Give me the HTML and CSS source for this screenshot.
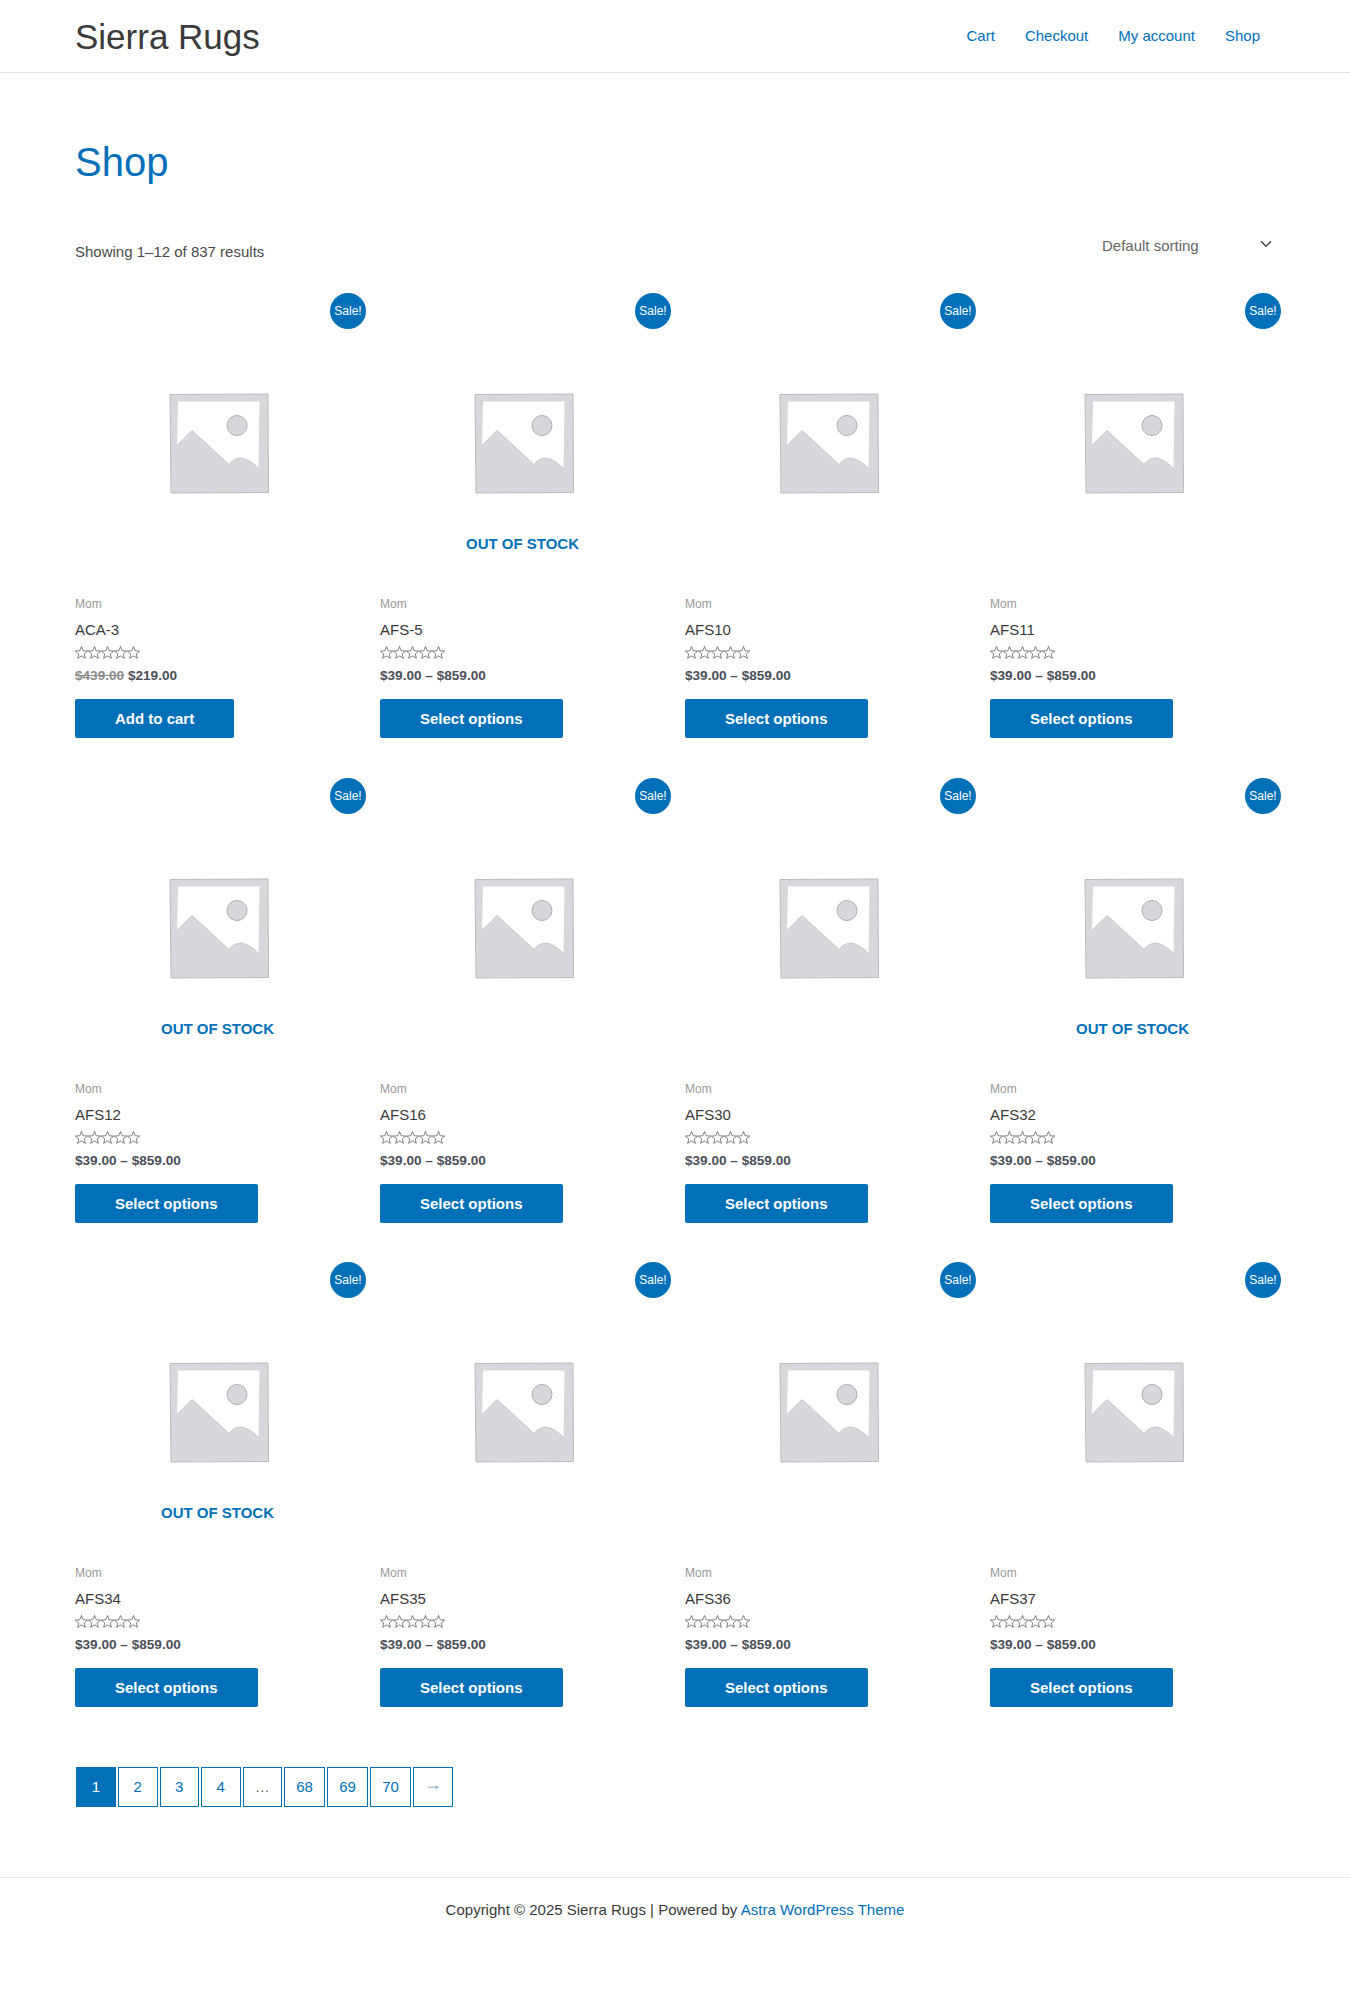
FILE: index.html
```html
<!DOCTYPE html>
<html lang="en">
<head>
<meta charset="utf-8">
<title>Shop – Sierra Rugs</title>
<link rel="stylesheet" href="styles.css">
</head>
<body>
<svg class="defs" aria-hidden="true" width="0" height="0">
  <symbol id="ph" viewBox="0 0 100 100">
    <path d="M1 1 L99 0.5 L99.5 99 L2 99.5 Z" fill="#d6d8dc" stroke="#bcbcbf" stroke-width="1"/>
    <path d="M9 8 L90.5 8 L89.5 75 Q81 66 72 64.5 Q65 64.5 60 71 L23 37 L8 52 Z" fill="#fff"/>
    <circle cx="68" cy="32" r="10" fill="#d6d8dc" stroke="#aeaeb2" stroke-width="1"/>
    <path d="M8 52 L23 37 L60 71 Q65 64.5 72 64.5 Q81 66 89.5 75" fill="none" stroke="#bcbcbf" stroke-width=".8"/>
  </symbol>
  <symbol id="star" viewBox="0 0 24 24">
    <path d="M12 1 L15.1 8.8 L23.4 9.3 L17 14.7 L19.1 22.8 L12 18.3 L4.9 22.8 L7 14.7 L.6 9.3 L8.9 8.8 Z" fill="#fff" stroke="#3f3f3f" stroke-width="1.2" stroke-linejoin="round"/>
  </symbol>
</svg>

<header class="site-header">
  <a class="logo" href="#">Sierra Rugs</a>
  <nav class="nav">
    <a href="#">Cart</a>
    <a href="#">Checkout</a>
    <a href="#">My account</a>
    <a href="#">Shop</a>
  </nav>
</header>

<main class="main">
  <h1 class="title">Shop</h1>
  <div class="toolbar">
    <p class="count">Showing 1–12 of 837 results</p>
    <div class="sort">
      <span class="sort-label">Default sorting</span>
      <svg class="chev" viewBox="0 0 12 8" width="12" height="8"><path d="M1 1.2 L6 6.2 L11 1.2" fill="none" stroke="#444" stroke-width="1.4"/></svg>
    </div>
  </div>

  <ul class="grid">
    <li class="card">
      <span class="badge">Sale!</span>
      <div class="thumb"><svg class="ph"><use href="#ph"/></svg></div>
      <p class="cat">Mom</p>
      <h2 class="name">ACA-3</h2>
      <div class="stars"><svg><use href="#star"/></svg><svg><use href="#star"/></svg><svg><use href="#star"/></svg><svg><use href="#star"/></svg><svg><use href="#star"/></svg></div>
      <p class="price"><del>$439.00</del> $219.00</p>
      <a class="btn" href="#">Add to cart</a>
    </li>
    <li class="card">
      <span class="badge">Sale!</span>
      <div class="thumb"><svg class="ph"><use href="#ph"/></svg><span class="oos">OUT OF STOCK</span></div>
      <p class="cat">Mom</p>
      <h2 class="name">AFS-5</h2>
      <div class="stars"><svg><use href="#star"/></svg><svg><use href="#star"/></svg><svg><use href="#star"/></svg><svg><use href="#star"/></svg><svg><use href="#star"/></svg></div>
      <p class="price">$39.00 – $859.00</p>
      <a class="btn" href="#">Select options</a>
    </li>
    <li class="card">
      <span class="badge">Sale!</span>
      <div class="thumb"><svg class="ph"><use href="#ph"/></svg></div>
      <p class="cat">Mom</p>
      <h2 class="name">AFS10</h2>
      <div class="stars"><svg><use href="#star"/></svg><svg><use href="#star"/></svg><svg><use href="#star"/></svg><svg><use href="#star"/></svg><svg><use href="#star"/></svg></div>
      <p class="price">$39.00 – $859.00</p>
      <a class="btn" href="#">Select options</a>
    </li>
    <li class="card">
      <span class="badge">Sale!</span>
      <div class="thumb"><svg class="ph"><use href="#ph"/></svg></div>
      <p class="cat">Mom</p>
      <h2 class="name">AFS11</h2>
      <div class="stars"><svg><use href="#star"/></svg><svg><use href="#star"/></svg><svg><use href="#star"/></svg><svg><use href="#star"/></svg><svg><use href="#star"/></svg></div>
      <p class="price">$39.00 – $859.00</p>
      <a class="btn" href="#">Select options</a>
    </li>
    <li class="card">
      <span class="badge">Sale!</span>
      <div class="thumb"><svg class="ph"><use href="#ph"/></svg><span class="oos">OUT OF STOCK</span></div>
      <p class="cat">Mom</p>
      <h2 class="name">AFS12</h2>
      <div class="stars"><svg><use href="#star"/></svg><svg><use href="#star"/></svg><svg><use href="#star"/></svg><svg><use href="#star"/></svg><svg><use href="#star"/></svg></div>
      <p class="price">$39.00 – $859.00</p>
      <a class="btn" href="#">Select options</a>
    </li>
    <li class="card">
      <span class="badge">Sale!</span>
      <div class="thumb"><svg class="ph"><use href="#ph"/></svg></div>
      <p class="cat">Mom</p>
      <h2 class="name">AFS16</h2>
      <div class="stars"><svg><use href="#star"/></svg><svg><use href="#star"/></svg><svg><use href="#star"/></svg><svg><use href="#star"/></svg><svg><use href="#star"/></svg></div>
      <p class="price">$39.00 – $859.00</p>
      <a class="btn" href="#">Select options</a>
    </li>
    <li class="card">
      <span class="badge">Sale!</span>
      <div class="thumb"><svg class="ph"><use href="#ph"/></svg></div>
      <p class="cat">Mom</p>
      <h2 class="name">AFS30</h2>
      <div class="stars"><svg><use href="#star"/></svg><svg><use href="#star"/></svg><svg><use href="#star"/></svg><svg><use href="#star"/></svg><svg><use href="#star"/></svg></div>
      <p class="price">$39.00 – $859.00</p>
      <a class="btn" href="#">Select options</a>
    </li>
    <li class="card">
      <span class="badge">Sale!</span>
      <div class="thumb"><svg class="ph"><use href="#ph"/></svg><span class="oos">OUT OF STOCK</span></div>
      <p class="cat">Mom</p>
      <h2 class="name">AFS32</h2>
      <div class="stars"><svg><use href="#star"/></svg><svg><use href="#star"/></svg><svg><use href="#star"/></svg><svg><use href="#star"/></svg><svg><use href="#star"/></svg></div>
      <p class="price">$39.00 – $859.00</p>
      <a class="btn" href="#">Select options</a>
    </li>
    <li class="card">
      <span class="badge">Sale!</span>
      <div class="thumb"><svg class="ph"><use href="#ph"/></svg><span class="oos">OUT OF STOCK</span></div>
      <p class="cat">Mom</p>
      <h2 class="name">AFS34</h2>
      <div class="stars"><svg><use href="#star"/></svg><svg><use href="#star"/></svg><svg><use href="#star"/></svg><svg><use href="#star"/></svg><svg><use href="#star"/></svg></div>
      <p class="price">$39.00 – $859.00</p>
      <a class="btn" href="#">Select options</a>
    </li>
    <li class="card">
      <span class="badge">Sale!</span>
      <div class="thumb"><svg class="ph"><use href="#ph"/></svg></div>
      <p class="cat">Mom</p>
      <h2 class="name">AFS35</h2>
      <div class="stars"><svg><use href="#star"/></svg><svg><use href="#star"/></svg><svg><use href="#star"/></svg><svg><use href="#star"/></svg><svg><use href="#star"/></svg></div>
      <p class="price">$39.00 – $859.00</p>
      <a class="btn" href="#">Select options</a>
    </li>
    <li class="card">
      <span class="badge">Sale!</span>
      <div class="thumb"><svg class="ph"><use href="#ph"/></svg></div>
      <p class="cat">Mom</p>
      <h2 class="name">AFS36</h2>
      <div class="stars"><svg><use href="#star"/></svg><svg><use href="#star"/></svg><svg><use href="#star"/></svg><svg><use href="#star"/></svg><svg><use href="#star"/></svg></div>
      <p class="price">$39.00 – $859.00</p>
      <a class="btn" href="#">Select options</a>
    </li>
    <li class="card">
      <span class="badge">Sale!</span>
      <div class="thumb"><svg class="ph"><use href="#ph"/></svg></div>
      <p class="cat">Mom</p>
      <h2 class="name">AFS37</h2>
      <div class="stars"><svg><use href="#star"/></svg><svg><use href="#star"/></svg><svg><use href="#star"/></svg><svg><use href="#star"/></svg><svg><use href="#star"/></svg></div>
      <p class="price">$39.00 – $859.00</p>
      <a class="btn" href="#">Select options</a>
    </li>
  </ul>

  <nav class="pager">
    <span class="page current">1</span>
    <a class="page" href="#">2</a>
    <a class="page" href="#">3</a>
    <a class="page" href="#">4</a>
    <span class="page dots">…</span>
    <a class="page wide" href="#">68</a>
    <a class="page wide" href="#">69</a>
    <a class="page wide" href="#">70</a>
    <a class="page arrow" href="#">→</a>
  </nav>
</main>

<footer class="footer">
  <p>Copyright © 2025 Sierra Rugs | Powered by <a href="#">Astra WordPress Theme</a></p>
</footer>
</body>
</html>
```
FILE: styles.css
```css
* { box-sizing: border-box; }
html, body { margin: 0; padding: 0; }
body {
  background: #fff;
  color: #3a3a3a;
  font-family: "Liberation Sans", Arial, sans-serif;
  font-size: 15px;
  line-height: 1.5;
}
a { color: #0170b9; text-decoration: none; }
.defs { position: absolute; }

.site-header {
  height: 73px;
  padding: 0 75px;
  border-bottom: 1px solid #e5e5e5;
  display: flex;
  align-items: center;
  justify-content: space-between;
}
.logo { font-size: 35px; color: #3a3a3a; line-height: 1; }
.nav { display: flex; gap: 30px; font-size: 15px; padding-right: 15px; }

.main { padding: 59px 75px 0; }
.title {
  margin: 0;
  font-size: 40px;
  font-weight: 400;
  line-height: 60px;
  color: #0170b9;
}
.toolbar {
  margin-top: 36px;
  height: 65px;
  display: flex;
  justify-content: space-between;
}
.count { margin: 13px 0 0; font-size: 15px; line-height: 22px; color: #4a4a4a; }
.sort {
  display: flex;
  align-items: flex-start;
  gap: 61px;
  width: 169px;
  margin-right: 4px;
  padding-top: 7px;
  font-size: 15px;
  color: #666;
}
.sort-label { white-space: nowrap; }
.chev { margin-top: 5px; flex: none; }

.grid {
  list-style: none;
  margin: 0;
  padding: 0;
  display: grid;
  grid-template-columns: repeat(4, 289px);
  column-gap: 16px;
  row-gap: 0;
}
.card { position: relative; height: 484.5px; padding-top: 6px; }
.badge {
  position: absolute;
  top: 0;
  right: -2px;
  width: 36px;
  height: 36px;
  border-radius: 50%;
  background: #0170b9;
  color: #fff;
  font-size: 12px;
  line-height: 36px;
  text-align: center;
}
.thumb {
  position: relative;
  height: 289px;
  padding-right: 2px;
  display: flex;
  align-items: center;
  justify-content: center;
}
.ph { width: 100px; height: 101px; }
.oos {
  position: absolute;
  top: 235px;
  left: 0;
  width: 285px;
  text-align: center;
  font-size: 15px;
  font-weight: 700;
  line-height: 20px;
  color: #0170b9;
}
.cat { margin: 7px 0 0; font-size: 12px; line-height: 18px; color: #999; }
.name { margin: 6px 0 0; font-size: 15px; font-weight: 400; line-height: 22px; color: #3a3a3a; }
.stars { display: flex; height: 13px; margin-top: 5px; }
.stars svg { width: 13px; height: 13px; }
.price { margin: 7px 0 0; font-size: 13.6px; font-weight: 700; line-height: 20px; color: #4b4f58; }
.price del { color: #8c8c8c; font-weight: 700; }
.btn {
  display: inline-block;
  margin-top: 13px;
  height: 39px;
  padding: 0 40px;
  border-radius: 2px;
  background: #0170b9;
  color: #fff;
  font-size: 15px;
  font-weight: 700;
  line-height: 39px;
}

.pager { display: flex; gap: 2px; margin-top: 20.5px; margin-left: 1px; height: 40px; }
.page {
  width: 39.5px;
  height: 40px;
  border: 1px solid #0170b9;
  font-size: 15px;
  line-height: 38px;
  text-align: center;
  color: #0170b9;
}
.page.current { width: 40px; background: #0170b9; color: #fff; }
.page.wide { width: 41px; }
.page.dots { color: #666; }
.page.arrow { font-size: 18px; line-height: 33px; color: #7fa9c9; }

.footer {
  margin-top: 70px;
  height: 121px;
  border-top: 1px solid #e5e5e5;
  text-align: center;
  font-size: 15px;
  padding-top: 21px;
}
.footer p { margin: 0; line-height: 22px; }
```
